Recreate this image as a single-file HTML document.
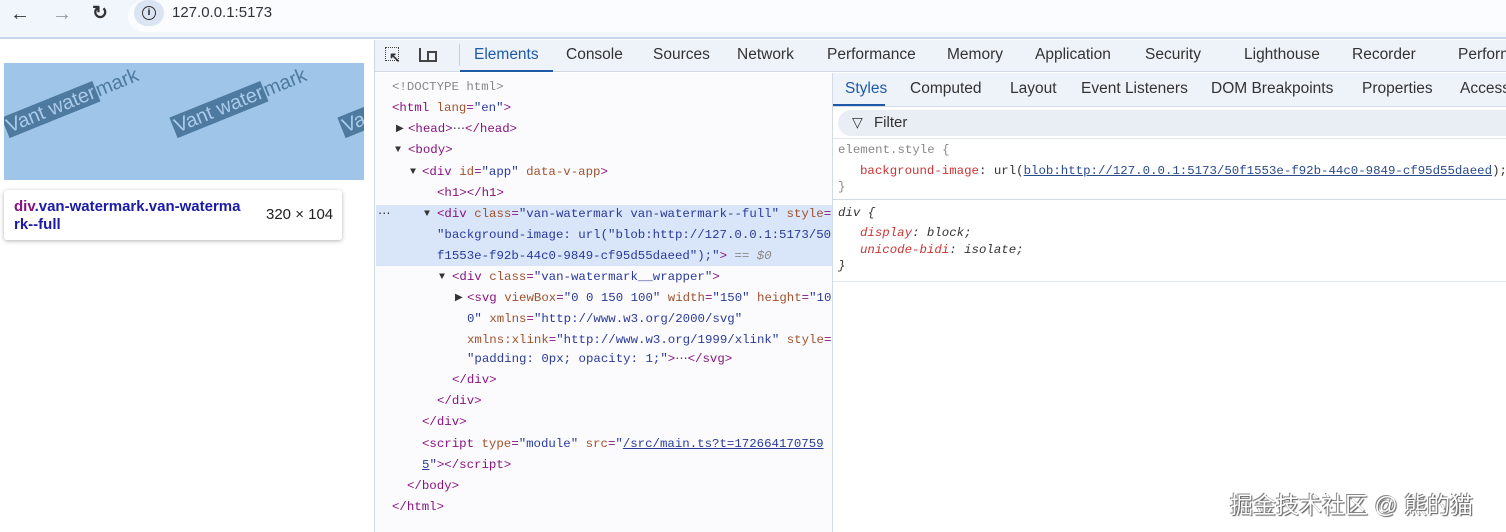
<!DOCTYPE html>
<html><head><meta charset="utf-8"><style>
*{margin:0;padding:0;box-sizing:border-box}
body{width:1506px;height:532px;overflow:hidden;position:relative;background:#fff;font-family:"Liberation Sans",sans-serif}
.a{position:absolute;white-space:nowrap}
.top{left:0;top:0;width:1506px;height:39px;background:#f1f5fc;border-bottom:2px solid #c9d6ea}
.pill{left:128px;top:0;width:1400px;height:32px;background:#fafcff;border-radius:16px}
.tab{font-size:15.5px;color:#333;top:46px}
.st{font-size:15.5px;color:#333;top:80px}
.c{font-family:"Liberation Mono",monospace;font-size:12.4px;height:21px;line-height:21px;color:#881280}
.t{color:#8a2a6a}.n{color:#a0522d}.v{color:#2a3a9a}
.tri{font-size:10px;color:#333}
.wm{position:absolute;transform:rotate(-22deg);transform-origin:left bottom;font-size:20px;line-height:23px;color:#4f7aa0;white-space:nowrap}
.wm span{background:#4f7aa0;color:#a9cbea;padding:0 2px}
</style></head><body>
<div class="a top"></div>
<div class="a pill"></div>
<div class="a" style="left:10px;top:3px;font-size:20px;color:#333">&#8592;</div>
<div class="a" style="left:52px;top:3px;font-size:20px;color:#999">&#8594;</div>
<div class="a" style="left:92px;top:2px;font-size:19px;color:#333;font-weight:bold">&#8635;</div>
<div class="a" style="left:134px;top:0;width:30px;height:26px;border-radius:13px;background:#dbe4f3"></div>
<div class="a" style="left:142px;top:6px;width:14px;height:14px;border:1.6px solid #333;border-radius:50%;font-size:9px;text-align:center;line-height:11px;font-weight:bold">i</div>
<div class="a" style="left:172px;top:4px;font-size:15px;color:#333">127.0.0.1:5173</div>

<!-- page -->
<div class="a" style="left:4px;top:63px;width:360px;height:117px;background:#9fc5e8;overflow:hidden">
<div class="wm" style="left:6px;top:53px"><span>Vant water</span>mark</div>
<div class="wm" style="left:174px;top:53px"><span>Vant water</span>mark</div>
<div class="wm" style="left:342px;top:53px"><span>Vant water</span>mark</div>
</div>
<div class="a" style="left:4px;top:190px;width:338px;height:50px;background:#fff;border-radius:3px;box-shadow:0 1px 4px rgba(0,0,0,.3)"></div>
<div class="a" style="left:14px;top:198px;font-size:15px;font-weight:bold;color:#1a1aa6;line-height:18px"><span style="color:#881280">div</span>.van-watermark.van-waterma<br>rk--full</div>
<div class="a" style="left:266px;top:206px;font-size:15px;color:#222">320 × 104</div>

<!-- devtools -->
<div class="a" style="left:374px;top:40px;width:1132px;height:492px;background:#fff;border-left:1px solid #d0d7e2"></div>
<div class="a" style="left:375px;top:40px;width:1131px;height:32px;background:#eef2f9;border-bottom:1px solid #d3dae6"></div>
<div class="a" style="left:385px;top:47px;width:14px;height:14px;border:1.5px dotted #444"></div>
<div class="a" style="left:389px;top:49px;font-size:14px;color:#333;font-weight:bold">&#8598;</div>
<div class="a" style="left:419px;top:48px;width:18px;height:14px;border-left:2px solid #444;border-bottom:2px solid #444"></div>
<div class="a" style="left:427px;top:51px;width:10px;height:11px;border:2px solid #444"></div>
<div class="a" style="left:459px;top:44px;width:1px;height:22px;background:#ccd"></div>
<div class="a tab" style="left:474px;color:#1f5aa8">Elements</div>
<div class="a" style="left:460px;top:70px;width:93px;height:2px;background:#1f5aa8"></div>
<div class="a tab" style="left:566px">Console</div>
<div class="a tab" style="left:653px">Sources</div>
<div class="a tab" style="left:737px">Network</div>
<div class="a tab" style="left:827px">Performance</div>
<div class="a tab" style="left:947px">Memory</div>
<div class="a tab" style="left:1035px">Application</div>
<div class="a tab" style="left:1145px">Security</div>
<div class="a tab" style="left:1244px">Lighthouse</div>
<div class="a tab" style="left:1352px">Recorder</div>
<div class="a tab" style="left:1458px">Perform</div>

<!-- elements -->
<div class="a" style="left:375px;top:73px;width:458px;height:459px;background:#fbfbfd"></div>
<div class="a" style="left:376px;top:205px;width:456px;height:61px;background:#d9e5f9"></div>
<div class="a" style="left:832px;top:73px;width:1px;height:459px;background:#d3dae6"></div>
<div class="a c" style="left:392px;top:77px;color:#888">&lt;!DOCTYPE html&gt;</div>
<div class="a c" style="left:392px;top:98px">&lt;html <span class="n">lang</span>=<span class="v">"en"</span>&gt;</div>
<div class="a c tri" style="left:396px;top:119px">&#9654;</div>
<div class="a c" style="left:408px;top:119px">&lt;head&gt;<span style="color:#444">&#8943;</span>&lt;/head&gt;</div>
<div class="a c tri" style="left:395px;top:140px">&#9660;</div>
<div class="a c" style="left:408px;top:140px">&lt;body&gt;</div>
<div class="a c tri" style="left:410px;top:162px">&#9660;</div>
<div class="a c" style="left:422px;top:162px">&lt;div <span class="n">id</span>=<span class="v">"app"</span> <span class="n">data-v-app</span>&gt;</div>
<div class="a c" style="left:437px;top:183px">&lt;h1&gt;&lt;/h1&gt;</div>
<div class="a c" style="left:378px;top:204px;color:#333">&#8943;</div>
<div class="a c tri" style="left:424px;top:204px">&#9660;</div>
<div class="a c" style="left:437px;top:204px">&lt;div <span class="n">class</span>=<span class="v">"van-watermark van-watermark--full"</span> <span class="n">style</span>=</div>
<div class="a c v" style="left:437px;top:225px">"background-image: url("blob:http://127.0.0.1:5173/50</div>
<div class="a c" style="left:437px;top:246px"><span class="v">f1553e-f92b-44c0-9849-cf95d55daeed");"</span>&gt; <span style="color:#888;font-style:italic">== $0</span></div>
<div class="a c tri" style="left:439px;top:267px">&#9660;</div>
<div class="a c" style="left:452px;top:267px">&lt;div <span class="n">class</span>=<span class="v">"van-watermark__wrapper"</span>&gt;</div>
<div class="a c tri" style="left:455px;top:288px">&#9654;</div>
<div class="a c" style="left:467px;top:288px">&lt;svg <span class="n">viewBox</span>=<span class="v">"0 0 150 100"</span> <span class="n">width</span>=<span class="v">"150"</span> <span class="n">height</span>=<span class="v">"10</span></div>
<div class="a c" style="left:467px;top:309px"><span class="v">0"</span> <span class="n">xmlns</span>=<span class="v">"http://www.w3.org/2000/svg"</span></div>
<div class="a c" style="left:467px;top:330px"><span class="n">xmlns:xlink</span>=<span class="v">"http://www.w3.org/1999/xlink"</span> <span class="n">style</span>=</div>
<div class="a c" style="left:467px;top:349px"><span class="v">"padding: 0px; opacity: 1;"</span>&gt;<span style="color:#444">&#8943;</span>&lt;/svg&gt;</div>
<div class="a c" style="left:452px;top:370px">&lt;/div&gt;</div>
<div class="a c" style="left:437px;top:391px">&lt;/div&gt;</div>
<div class="a c" style="left:422px;top:412px">&lt;/div&gt;</div>
<div class="a c" style="left:422px;top:434px">&lt;script <span class="n">type</span>=<span class="v">"module"</span> <span class="n">src</span>=<span class="v">"<u>/src/main.ts?t=172664170759</u></span></div>
<div class="a c" style="left:422px;top:455px"><span class="v"><u>5</u>"</span>&gt;&lt;/script&gt;</div>
<div class="a c" style="left:407px;top:476px">&lt;/body&gt;</div>
<div class="a c" style="left:392px;top:497px">&lt;/html&gt;</div>

<!-- styles -->
<div class="a" style="left:833px;top:73px;width:673px;height:34px;background:#eef2f9;border-bottom:1px solid #d3dae6"></div>
<div class="a st" style="left:845px;color:#1f5aa8">Styles</div>
<div class="a" style="left:833px;top:104px;width:52px;height:2px;background:#1f5aa8"></div>
<div class="a st" style="left:910px">Computed</div>
<div class="a st" style="left:1010px">Layout</div>
<div class="a st" style="left:1081px">Event Listeners</div>
<div class="a st" style="left:1211px">DOM Breakpoints</div>
<div class="a st" style="left:1362px">Properties</div>
<div class="a st" style="left:1460px">Accessibility</div>
<div class="a" style="left:838px;top:110px;width:680px;height:26px;background:#e9edf4;border-radius:13px"></div>
<div class="a" style="left:852px;top:114px;font-size:14px;color:#333">&#9661;</div>
<div class="a" style="left:874px;top:114px;font-size:15px;color:#333">Filter</div>
<div class="a" style="left:833px;top:138px;width:673px;height:1px;background:#e3e7ee"></div>
<div class="a c" style="left:838px;top:140px;color:#888">element.style {</div>
<div class="a c" style="left:860px;top:161px;color:#333"><span style="color:#c33">background-image</span>: url(<span style="color:#2a4a8a;text-decoration:underline">blob:http://127.0.0.1:5173/50f1553e-f92b-44c0-9849-cf95d55daeed</span>);</div>
<div class="a c" style="left:838px;top:177px;color:#888">}</div>
<div class="a" style="left:833px;top:199px;width:673px;height:1px;background:#d3dae6"></div>
<div class="a c" style="left:838px;top:203px;color:#333;font-style:italic">div {</div>
<div class="a c" style="left:860px;top:223px;color:#333;font-style:italic"><span style="color:#c33">display</span>: block;</div>
<div class="a c" style="left:860px;top:240px;color:#333;font-style:italic"><span style="color:#c33">unicode-bidi</span>: isolate;</div>
<div class="a c" style="left:838px;top:256px;color:#333;font-style:italic">}</div>
<div class="a" style="left:833px;top:281px;width:673px;height:1px;background:#e3e7ee"></div>
<div class="a" style="left:1230px;top:486px;font-size:23px;color:#fff;font-family:'Liberation Sans','Noto Sans CJK SC',sans-serif;text-shadow:1px 1px 1px #555,-1px -1px 0 #888">掘金技术社区 @ 熊的猫</div>
</body></html>
